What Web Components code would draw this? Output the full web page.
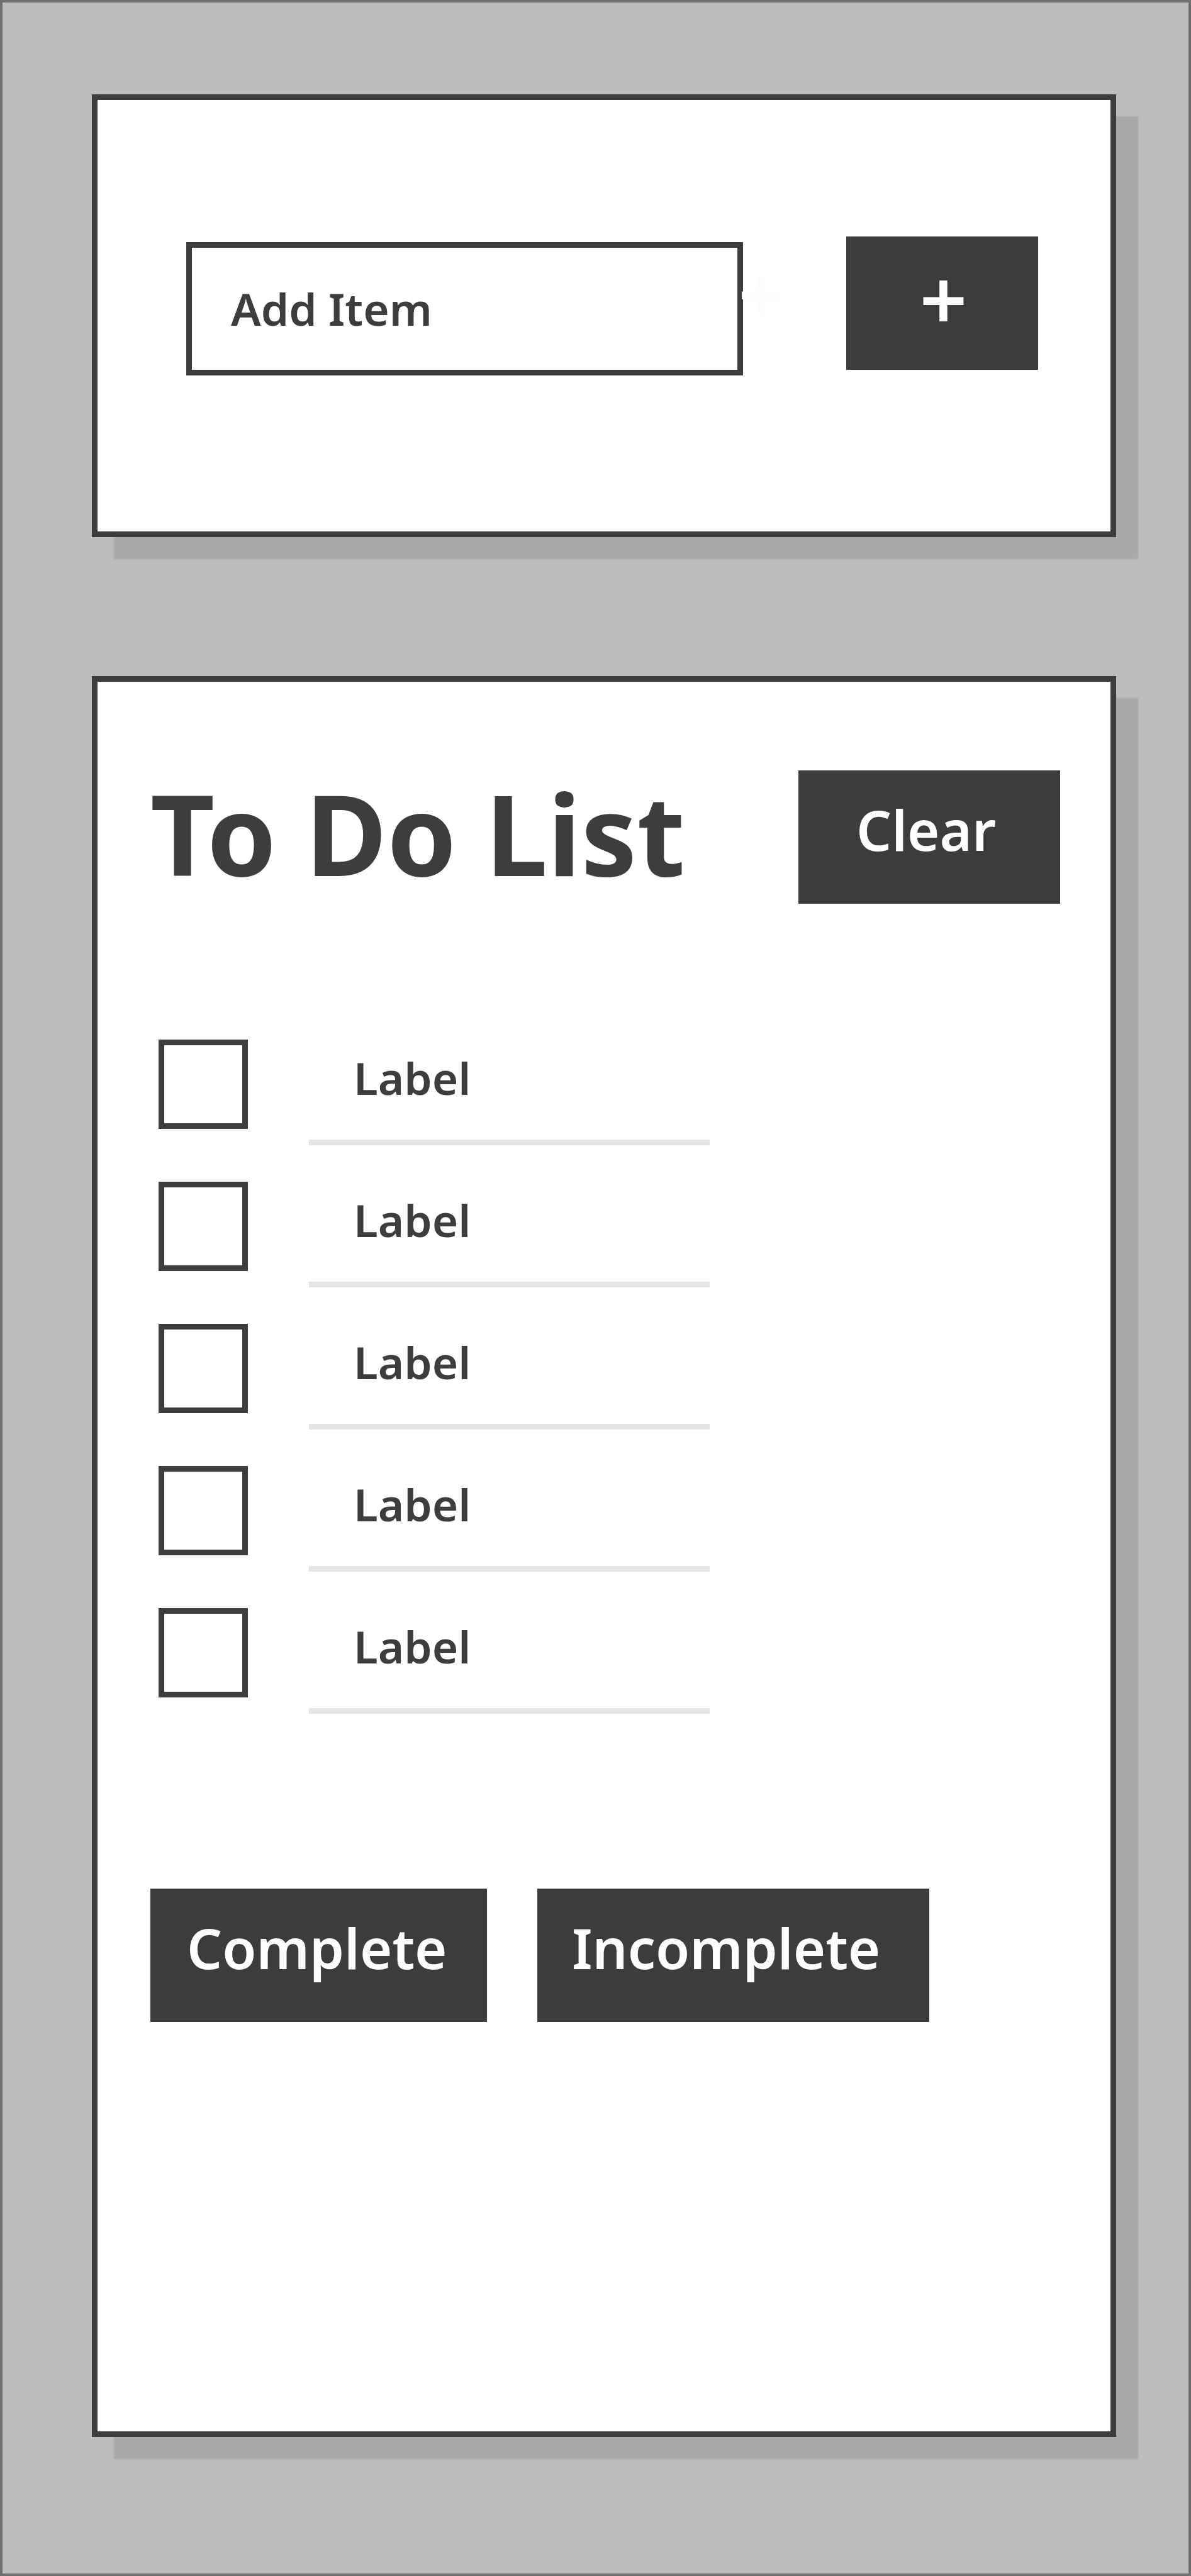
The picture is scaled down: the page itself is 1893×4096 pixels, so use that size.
<!DOCTYPE html>
<html lang="en">
<head>
<meta charset="utf-8">
<meta name="viewport" content="width=device-width, initial-scale=1">
<title>To Do List</title>
<style>
  :root {
    --ink: #3d3d3d;
    --fill: #3c3c3c;
    --on-fill: #fdfdfd;
    --rule: #e5e5e5;
    --paper: #ffffff;
    --line: 9px;
  }
  body { margin: 0; background: #bdbdbd; font-family: "Noto Sans", sans-serif; color: var(--ink); }
</style>
</head>
<body>
<todo-app></todo-app>
<script>
const define = (name, html) => {
  const template = document.createElement('template');
  template.innerHTML = html;
  customElements.define(name, class extends HTMLElement {
    constructor() {
      super();
      this.attachShadow({ mode: 'open' }).append(template.content.cloneNode(true));
    }
  });
};

define('todo-card', `
  <style>
    :host {
      display: block; box-sizing: border-box; background: var(--paper);
      border: var(--line) solid var(--ink); box-shadow: 35px 35px 2px #a9a9a9;
    }
  </style>
  <slot></slot>`);

define('todo-button', `
  <style>
    :host { display: block; flex: none; }
    button {
      display: block; box-sizing: border-box; width: 100%; margin: 0; border: 0;
      padding: 34px 0 58px var(--start, 58px);
      background: var(--fill); color: var(--on-fill);
      font: 600 88px/120px "Noto Sans", sans-serif; text-align: left; cursor: pointer;
    }
    :host([icon]) button { padding: 9px 0 23px 4px; font-size: 133px; line-height: 180px; text-align: center; }
  </style>
  <button type="button"><slot></slot></button>`);

define('todo-field', `
  <style>
    :host { display: block; position: relative; }
    input {
      display: block; box-sizing: border-box; width: 100%; height: 212px; margin: 0; padding: 0 62px 2px;
      border: var(--line) solid var(--ink); border-radius: 0; background: var(--paper); color: var(--ink);
      font: 600 71px/100px "Noto Sans", sans-serif; outline: 0;
    }
    input::placeholder { color: var(--ink); opacity: 1; }
    span {
      position: absolute; left: 100%; top: -9px; margin-left: -8px;
      color: var(--on-fill); font: 600 133px/180px "Noto Sans", sans-serif;
    }
  </style>
  <input type="text" placeholder="Add Item" aria-label="Add Item">
  <span aria-hidden="true">+</span>`);

define('todo-item', `
  <style>
    :host { display: flex; align-items: flex-start; gap: 97px; }
    input {
      appearance: none; flex: none; box-sizing: border-box; width: 142px; height: 142px; margin: 0;
      border: var(--line) solid var(--ink); background: var(--paper);
    }
    input:checked { background: var(--ink); box-shadow: inset 0 0 0 18px var(--paper); }
    label {
      box-sizing: border-box; width: 637px; padding: 0 71px 37px; border-bottom: var(--line) solid var(--rule);
      font-weight: 600; font-size: 71px; line-height: 122px;
    }
  </style>
  <input type="checkbox" id="done">
  <label for="done"><slot></slot></label>`);

define('todo-entry', `
  <style>
    :host { display: block; }
    form { display: flex; align-items: flex-start; gap: 164px; padding: 217px 115px 248px 141px; }
    todo-field { flex: 1; margin-top: 9px; }
    todo-button { width: 305px; }
  </style>
  <form>
    <todo-field></todo-field>
    <todo-button icon>+</todo-button>
  </form>`);

define('todo-list', `
  <style>
    :host { display: block; padding: 141px 80px 651px 84px; }
    header { display: flex; align-items: flex-start; justify-content: space-between; }
    h1 { margin: 0; font-weight: 700; font-size: 177px; line-height: 200px; }
    .items { display: flex; flex-direction: column; gap: 58px; margin-top: 216px; padding-left: 13px; }
    footer { display: flex; gap: 80px; margin-top: 278px; }
    .clear { width: 416px; --start: 92px; }
    .complete { width: 535px; }
    .incomplete { width: 623px; --start: 55px; }
  </style>
  <header>
    <h1>To Do List</h1>
    <todo-button class="clear">Clear</todo-button>
  </header>
  <div class="items">
    <todo-item>Label</todo-item>
    <todo-item>Label</todo-item>
    <todo-item>Label</todo-item>
    <todo-item>Label</todo-item>
    <todo-item>Label</todo-item>
  </div>
  <footer>
    <todo-button class="complete">Complete</todo-button>
    <todo-button class="incomplete">Incomplete</todo-button>
  </footer>`);

define('todo-app', `
  <style>
    :host {
      display: flex; flex-direction: column; gap: 221px; box-sizing: border-box; min-height: 100vh;
      padding: 146px 115px 217px 142px; border: 4px solid #707070;
    }
  </style>
  <todo-card><todo-entry></todo-entry></todo-card>
  <todo-card><todo-list></todo-list></todo-card>`);
</script>
</body>
</html>
